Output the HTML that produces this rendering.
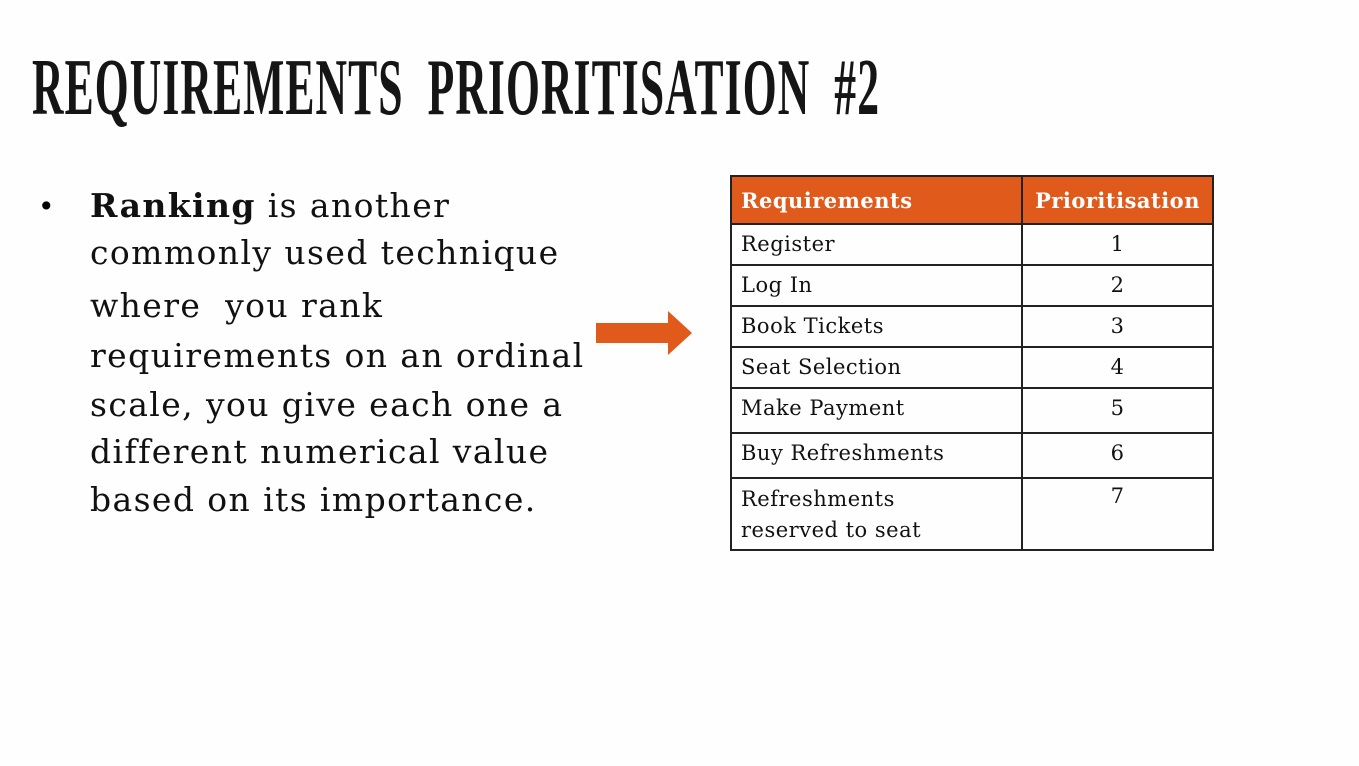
<!DOCTYPE html>
<html><head><meta charset="utf-8"><style>
body{margin:0;width:1359px;height:766px;background:#fefefe;position:relative;overflow:hidden;font-family:"DejaVu Serif","Liberation Serif",serif}
.title{position:absolute;left:32px;top:48px;font-family:"Liberation Serif",serif;font-weight:bold;font-size:80px;letter-spacing:2px;word-spacing:22px;color:#151515;transform-origin:0 0;transform:scaleX(0.545);white-space:nowrap;line-height:80px}
.l{position:absolute;left:90px;font-size:33px;letter-spacing:1.4px;color:#111;white-space:nowrap;line-height:40px}
.dot{position:absolute;left:38px;top:190px;font-size:28px}
table{position:absolute;left:730px;top:175px;border-collapse:collapse;font-size:21px;letter-spacing:0.5px;color:#111}
td{border:2px solid #222;padding:0 9px;vertical-align:top}
th{background:#e05a1c;color:#fff;text-align:left;padding:0 9px;height:46px;border:2px solid #222;font-size:21px}
td.n{text-align:center}
</style></head><body>
<div class="title">REQUIREMENTS PRIORITISATION #2</div>
<div class="dot">•</div>
<div class="l" style="top:186px"><b>Ranking</b> is another</div>
<div class="l" style="top:233px">commonly used technique</div>
<div class="l" style="top:286px">where&nbsp; you rank</div>
<div class="l" style="top:336px">requirements on an ordinal</div>
<div class="l" style="top:385px">scale, you give each one a</div>
<div class="l" style="top:432px">different numerical value</div>
<div class="l" style="top:480px">based on its importance.</div>
<svg style="position:absolute;left:596px;top:311px" width="98" height="46"><polygon points="0,12 72,12 72,0 96,22 72,44 72,32 0,32" fill="#e05a1c"/></svg>
<table>
<tr><th style="width:271px">Requirements</th><th style="width:171px;text-align:center">Prioritisation</th></tr>
<tr style="height:41px"><td style="padding-top:7px">Register</td><td class="n" style="padding-top:7px">1</td></tr>
<tr style="height:41px"><td style="padding-top:7px">Log In</td><td class="n" style="padding-top:7px">2</td></tr>
<tr style="height:41px"><td style="padding-top:7px">Book Tickets</td><td class="n" style="padding-top:7px">3</td></tr>
<tr style="height:41px"><td style="padding-top:7px">Seat Selection</td><td class="n" style="padding-top:7px">4</td></tr>
<tr style="height:45px"><td style="padding-top:7px">Make Payment</td><td class="n" style="padding-top:7px">5</td></tr>
<tr style="height:45px"><td style="padding-top:7px">Buy Refreshments</td><td class="n" style="padding-top:7px">6</td></tr>
<tr style="height:72px"><td style="padding-top:5px;line-height:31px">Refreshments<br>reserved to seat</td><td class="n" style="padding-top:5px">7</td></tr>
</table>
</body></html>
